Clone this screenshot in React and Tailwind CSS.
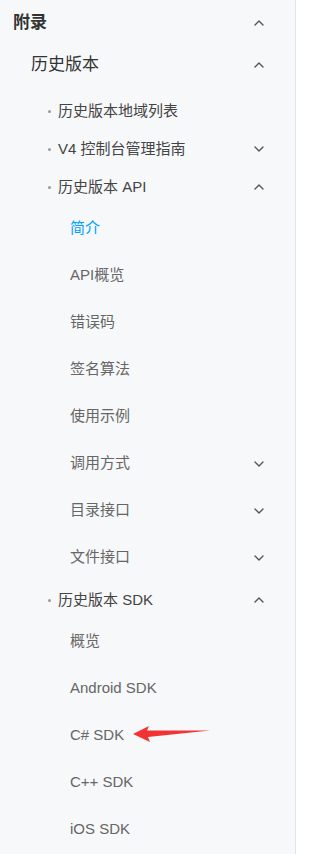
import React from "react";

const font = { fontFamily: '"Liberation Sans", "Noto Sans CJK SC", sans-serif' };

function Chevron({ up }) {
  return (
    <svg width="10" height="6" viewBox="0 0 10 6" className="block">
      <path
        d={up ? "M1 5 L5 1 L9 5" : "M1 1 L5 5 L9 1"}
        fill="none"
        stroke="#555"
        strokeWidth="1.4"
        strokeLinecap="round"
        strokeLinejoin="round"
      />
    </svg>
  );
}

function L2({ text, chevron }) {
  return (
    <div className="h-[38px] flex items-center justify-between pl-[48px] pr-[31px]">
      <div className="flex items-center">
        <span className="w-[3px] h-[3px] rounded-full bg-[#9a9a9a] mr-[7px]" />
        <span className="text-[15px] text-[#444]">{text}</span>
      </div>
      {chevron ? <Chevron up={chevron === "up"} /> : null}
    </div>
  );
}

function L3({ text, chevron, active, children }) {
  return (
    <div className="relative h-[47px] flex items-center justify-between pl-[70px] pr-[31px]">
      <span className={"text-[15px] " + (active ? "text-[#00a0ff]" : "text-[#666]")}>{text}</span>
      {chevron ? <Chevron up={chevron === "up"} /> : null}
      {children}
    </div>
  );
}

export default function App() {
  return (
    <div className="w-[301px] h-[854px] bg-white flex overflow-hidden" style={font}>
      <div className="w-[296px] h-full bg-[#f7f8fa] border-r border-[#e3e3e3]">
        <div className="h-[46px] flex items-center justify-between pl-[13px] pr-[31px]">
          <span className="text-[17px] font-bold text-[#333]">附录</span>
          <Chevron up />
        </div>
        <div className="h-[38px] flex items-center justify-between pl-[31px] pr-[31px]">
          <span className="text-[17px] text-[#333]">历史版本</span>
          <Chevron up />
        </div>
        <div className="mt-[8px]">
          <L2 text="历史版本地域列表" />
          <L2 text="V4 控制台管理指南" chevron="down" />
          <L2 text="历史版本 API" chevron="up" />
          <div className="-mt-[1px]">
            <L3 text="简介" active />
            <L3 text="API概览" />
            <L3 text="错误码" />
            <L3 text="签名算法" />
            <L3 text="使用示例" />
            <L3 text="调用方式" chevron="down" />
            <L3 text="目录接口" chevron="down" />
            <L3 text="文件接口" chevron="down" />
          </div>
          <L2 text="历史版本 SDK" chevron="up" />
          <div className="-mt-[1px]">
            <L3 text="概览" />
            <L3 text="Android SDK" />
            <L3 text="C# SDK">
              <svg
                className="absolute left-[128px] top-0"
                width="90"
                height="47"
                viewBox="0 0 90 47"
              >
                <polygon
                  points="5,22 21,14 19,18.5 82,18.5 20,25 22,30"
                  fill="#f23333"
                />
              </svg>
            </L3>
            <L3 text="C++ SDK" />
            <L3 text="iOS SDK" />
          </div>
        </div>
      </div>
    </div>
  );
}
